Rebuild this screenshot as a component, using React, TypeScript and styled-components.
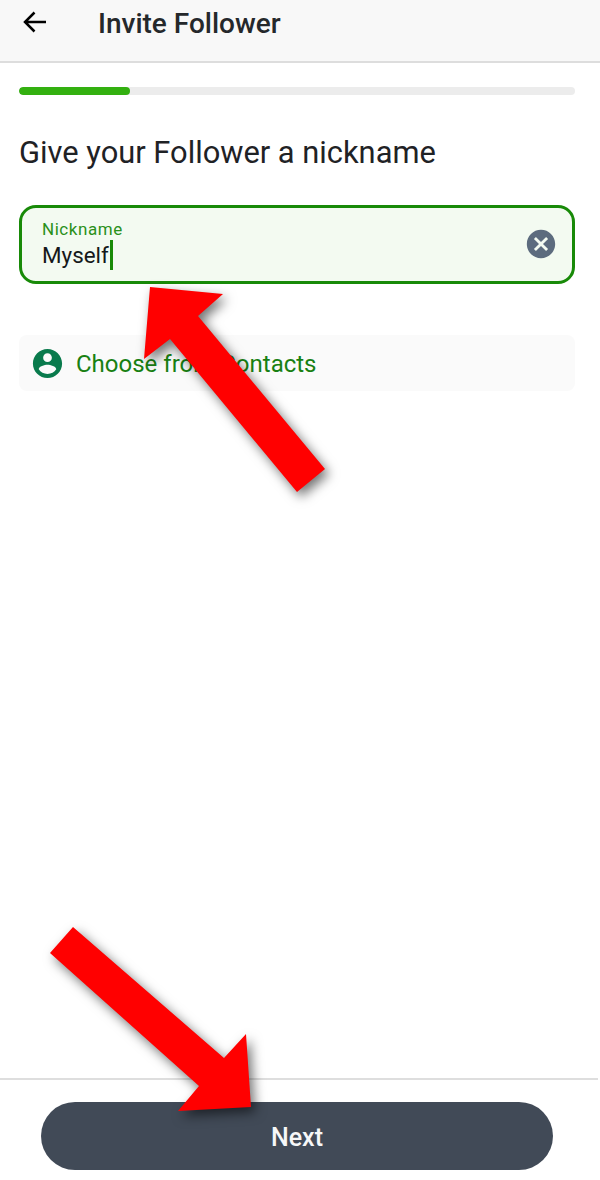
import React from "react";
import styled, { createGlobalStyle } from "styled-components";

const Global = createGlobalStyle`
  html, body { margin: 0; padding: 0; background: #fff; }
  body { font-family: Roboto, "Liberation Sans", sans-serif; }
`;

const Screen = styled.div`
  position: relative;
  width: 600px;
  height: 1180px;
  display: flex;
  flex-direction: column;
  overflow: hidden;
  background: #fff;
`;

const Header = styled.header`
  height: 61px;
  flex: none;
  display: flex;
  align-items: flex-start;
  background: #f8f8f8;
  border-bottom: 2px solid #dddddd;
`;

const BackButton = styled.div`
  width: 24px;
  height: 24px;
  margin: 10px 0 0 23px;
  display: flex;
`;

const Title = styled.h1`
  margin: 6px 0 0 51px;
  font-size: 28px;
  line-height: 36px;
  font-weight: 500;
  color: #25282b;
`;

const Content = styled.main`
  flex: 1;
  display: flex;
  flex-direction: column;
  padding: 24px 25px 0 19px;
`;

const Track = styled.div`
  height: 8px;
  border-radius: 4px;
  background: #ececec;
  overflow: hidden;
`;

const Fill = styled.div<{ $percent: number }>`
  width: ${(p) => p.$percent}%;
  height: 100%;
  border-radius: 4px;
  background: #33b010;
`;

const Heading = styled.h2`
  margin: 38px 0 0;
  font-size: 30.85px;
  line-height: 40px;
  font-weight: 400;
  color: #1f2225;
`;

const Field = styled.div`
  box-sizing: border-box;
  height: 79px;
  margin-top: 32px;
  padding: 12px 14px 0 20px;
  display: flex;
  justify-content: space-between;
  background: #f3faf1;
  border: 3px solid #188a08;
  border-radius: 17px;
`;

const FieldText = styled.div`
  display: flex;
  flex-direction: column;
`;

const FieldLabel = styled.label`
  font-size: 17px;
  line-height: 18px;
  letter-spacing: 0.55px;
  color: #2a901a;
`;

const FieldValue = styled.div`
  display: flex;
  align-items: center;
  margin-top: 2px;
  font-size: 22.4px;
  line-height: 28px;
  color: #15181a;
`;

const Caret = styled.span`
  width: 3px;
  height: 30px;
  margin-left: 1px;
  background: #188a08;
`;

const ClearIcon = styled.svg`
  width: 34px;
  height: 34px;
  margin: 7px 0 0;
  fill: #5c6b7e;
`;

const ContactsRow = styled.div`
  height: 56px;
  margin-top: 51px;
  padding-left: 11px;
  display: flex;
  align-items: center;
  gap: 11px;
  background: #fafafa;
  border-radius: 8px;
`;

const ContactIcon = styled.svg`
  width: 35px;
  height: 35px;
  fill: #097a4c;
`;

const ContactsLabel = styled.span`
  margin-top: 2px;
  font-size: 24px;
  color: #188012;
`;

const Footer = styled.footer`
  flex: none;
  height: 102px;
  margin-right: 2px;
  padding: 22px 0 0 41px;
  box-sizing: border-box;
  border-top: 2px solid #dedede;
`;

const NextButton = styled.button`
  display: block;
  width: 512px;
  height: 68px;
  padding: 3px 0 0;
  border: none;
  border-radius: 34px;
  background: #414a57;
  color: #f6f7f8;
  font-family: inherit;
  font-size: 25px;
  font-weight: 500;
`;

const Annotation = styled.svg`
  position: absolute;
  inset: 0;
  width: 600px;
  height: 1180px;
  pointer-events: none;
  overflow: visible;
`;

const ArrowShape = styled.polygon`
  fill: #ff0000;
  filter: drop-shadow(4px 5px 6px rgba(0, 0, 0, 0.55));
`;

export default function App() {
  return (
    <Screen>
      <Global />
      <Header>
        <BackButton>
          <svg width="24" height="24" viewBox="0 0 24 24" fill="none" stroke="#000" strokeWidth="2.5">
            <path d="M23 12H2M11.5 2.5L2 12l9.5 9.5" />
          </svg>
        </BackButton>
        <Title>Invite Follower</Title>
      </Header>
      <Content>
        <Track>
          <Fill $percent={20} />
        </Track>
        <Heading>Give your Follower a nickname</Heading>
        <Field>
          <FieldText>
            <FieldLabel>Nickname</FieldLabel>
            <FieldValue>
              Myself
              <Caret />
            </FieldValue>
          </FieldText>
          <ClearIcon viewBox="0 0 24 24">
            <path d="M12 2C6.47 2 2 6.47 2 12s4.47 10 10 10 10-4.47 10-10S17.53 2 12 2zm5 13.59L15.59 17 12 13.41 8.41 17 7 15.59 10.59 12 7 8.41 8.41 7 12 10.59 15.59 7 17 8.41 13.41 12 17 15.59z" />
          </ClearIcon>
        </Field>
        <ContactsRow>
          <ContactIcon viewBox="0 0 24 24">
            <path d="M12 2C6.48 2 2 6.48 2 12s4.48 10 10 10 10-4.48 10-10S17.52 2 12 2zm0 3c1.66 0 3 1.34 3 3s-1.34 3-3 3-3-1.34-3-3 1.34-3 3-3zm0 14.2c-2.5 0-4.71-1.28-6-3.22.03-1.99 4-3.08 6-3.08 1.99 0 5.97 1.09 6 3.08-1.29 1.94-3.5 3.22-6 3.22z" />
          </ContactIcon>
          <ContactsLabel>Choose from Contacts</ContactsLabel>
        </ContactsRow>
      </Content>
      <Footer>
        <NextButton>Next</NextButton>
      </Footer>
      <Annotation viewBox="0 0 600 1180">
        <ArrowShape points="150,287 223,294 198,316 325,469 297,492 170,339 144,359" />
        <ArrowShape points="73,927 50,953 199,1086 178,1111 251,1107 246,1034 224,1058" />
      </Annotation>
    </Screen>
  );
}
